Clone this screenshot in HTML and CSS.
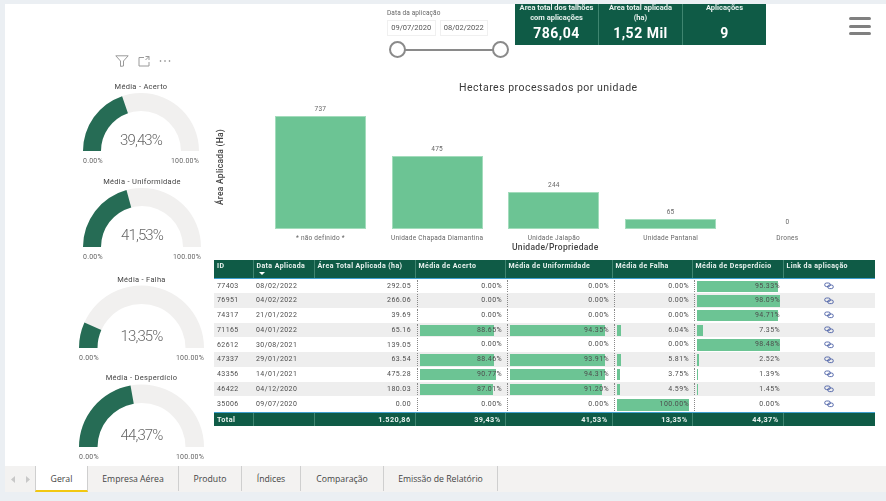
FILE: index.html
```html
<!DOCTYPE html>
<html lang="pt">
<head>
<meta charset="utf-8">
<title>Relatório</title>
<link rel="stylesheet" href="styles.css">
</head>
<body>
<main class="canvas">
  <aside class="gauges">
    <div class="toolbar">
      <svg class="tool" width="14" height="12" viewBox="0 0 14 12"><path d="M.8 .8h12.4L8.5 6v5L5.5 11.4V6z"/></svg>
      <svg class="tool" width="12" height="12" viewBox="0 0 12 12"><path d="M6 2.5H1v8.5h10V7M7.5 1.5h3.5v3.5M11 1.5L7.5 5"/></svg>
      <svg class="dots" width="12" height="4" viewBox="0 0 12 4"><circle cx="1.5" cy="2" r=".8"/><circle cx="6" cy="2" r=".8"/><circle cx="10.5" cy="2" r=".8"/></svg>
    </div>
    <svg class="gauge g1" width="205" height="90" viewBox="0 0 205 90">
      <text class="g-title" x="136" y="14">Média - Acerto</text>
      <path class="g-bg" d="M78 76A58 58 0 0 1 194 76L176 76A40 40 0 0 0 96 76Z"/>
      <path class="g-fg" d="M78 76A58 58 0 0 1 117.09 21.17L122.96 38.18A40 40 0 0 0 96 76Z"/>
      <text class="g-val" x="136" y="70">39,43%</text>
      <text class="g-min" x="78" y="88">0.00%</text>
      <text class="g-max" x="194" y="88">100.00%</text>
    </svg>
    <svg class="gauge" width="205" height="90" viewBox="0 0 205 90">
      <text class="g-title" x="137" y="11">Média - Uniformidade</text>
      <path class="g-bg" d="M78 74A59 59 0 0 1 196 74L178 74A41 41 0 0 0 96 74Z"/>
      <path class="g-fg" d="M78 74A59 59 0 0 1 121.48 17.08L126.22 34.44A41 41 0 0 0 96 74Z"/>
      <text class="g-val" x="137" y="67">41,53%</text>
      <text class="g-min" x="78" y="86">0.00%</text>
      <text class="g-max" x="196" y="86">100.00%</text>
    </svg>
    <svg class="gauge" width="205" height="90" viewBox="0 0 205 90">
      <text class="g-title" x="136.5" y="11">Média - Falha</text>
      <path class="g-bg" d="M74 77A62.5 62.5 0 0 1 199 77L180.5 77A44 44 0 0 0 92.5 77Z"/>
      <path class="g-fg" d="M74 77A62.5 62.5 0 0 1 79.42 51.55L96.31 59.08A44 44 0 0 0 92.5 77Z"/>
      <text class="g-val" x="136.5" y="70">13,35%</text>
      <text class="g-min" x="74" y="89">0.00%</text>
      <text class="g-max" x="199" y="89">100.00%</text>
    </svg>
    <svg class="gauge g4" width="205" height="90" viewBox="0 0 205 90">
      <text class="g-title" x="136.5" y="10">Média - Desperdício</text>
      <path class="g-bg" d="M74 77A62.5 62.5 0 0 1 199 77L180.5 77A44 44 0 0 0 92.5 77Z"/>
      <path class="g-fg" d="M74 77A62.5 62.5 0 0 1 125.51 15.47L128.76 33.69A44 44 0 0 0 92.5 77Z"/>
      <text class="g-val" x="136.5" y="70">44,37%</text>
      <text class="g-min" x="74" y="89">0.00%</text>
      <text class="g-max" x="199" y="89">100.00%</text>
    </svg>
  </aside>

  <section class="content">
    <header class="top">
      <div class="slicer">
        <div class="slicer-title">Data da aplicação</div>
        <div class="dates"><span class="date">09/07/2020</span><span class="date">08/02/2022</span></div>
        <div class="slider"><span class="handle"></span><span class="track"></span><span class="handle"></span></div>
      </div>
      <div class="kpis">
        <div class="kpi"><div class="kpi-title">Área total dos talhões com aplicações</div><div class="kpi-val">786,04</div></div>
        <div class="kpi"><div class="kpi-title">Área total aplicada (ha)</div><div class="kpi-val">1,52 Mil</div></div>
        <div class="kpi"><div class="kpi-title kpi-single">Aplicações</div><div class="kpi-val">9</div></div>
      </div>
      <div class="menu"><span></span><span></span><span></span></div>
    </header>

    <h1 class="chart-title">Hectares processados por unidade</h1>
    <div class="chart">
      <div class="y-title"><span>Área Aplicada (Ha)</span></div>
      <div class="plot">
        <div class="col"><span class="num">737</span><div class="bar b1"></div><span class="cat">* não definido *</span></div>
        <div class="col"><span class="num">475</span><div class="bar b2"></div><span class="cat">Unidade Chapada Diamantina</span></div>
        <div class="col"><span class="num">244</span><div class="bar b3"></div><span class="cat">Unidade Jalapão</span></div>
        <div class="col"><span class="num">65</span><div class="bar b4"></div><span class="cat">Unidade Pantanal</span></div>
        <div class="col"><span class="num">0</span><div class="bar b5"></div><span class="cat">Drones</span></div>
      </div>
    </div>
    <div class="x-title">Unidade/Propriedade</div>

    <table class="grid">
      <colgroup>
        <col class="c-id"><col class="c-date"><col class="c-area"><col class="c-a"><col class="c-u"><col class="c-f"><col class="c-d"><col class="c-l">
      </colgroup>
      <thead>
        <tr><th>ID</th><th class="sorted">Data Aplicada</th><th>Área Total Aplicada (ha)</th><th>Média de Acerto</th><th>Média de Uniformidade</th><th>Média de Falha</th><th>Média de Desperdício</th><th>Link da aplicação</th></tr>
      </thead>
      <tbody>
        <tr><td>77403</td><td>08/02/2022</td><td class="r">292.05</td>
          <td><div class="db"><span class="fill" style="width:0%"></span><span class="dv">0.00%</span></div></td>
          <td><div class="db"><span class="fill" style="width:0%"></span><span class="dv">0.00%</span></div></td>
          <td><div class="db"><span class="fill" style="width:0%"></span><span class="dv">0.00%</span></div></td>
          <td><div class="db"><span class="fill" style="width:95.33%"></span><span class="dv">95.33%</span></div></td>
          <td class="lk"><svg class="link" width="10" height="8" viewBox="0 0 10 8"><rect x=".7" y="1" width="5.6" height="3.6" rx="1.8"/><rect x="3.7" y="3" width="5.6" height="3.6" rx="1.8"/></svg></td></tr>
        <tr><td>76951</td><td>04/02/2022</td><td class="r">266.06</td>
          <td><div class="db"><span class="fill" style="width:0%"></span><span class="dv">0.00%</span></div></td>
          <td><div class="db"><span class="fill" style="width:0%"></span><span class="dv">0.00%</span></div></td>
          <td><div class="db"><span class="fill" style="width:0%"></span><span class="dv">0.00%</span></div></td>
          <td><div class="db"><span class="fill" style="width:98.09%"></span><span class="dv">98.09%</span></div></td>
          <td class="lk"><svg class="link" width="10" height="8" viewBox="0 0 10 8"><rect x=".7" y="1" width="5.6" height="3.6" rx="1.8"/><rect x="3.7" y="3" width="5.6" height="3.6" rx="1.8"/></svg></td></tr>
        <tr><td>74317</td><td>21/01/2022</td><td class="r">39.69</td>
          <td><div class="db"><span class="fill" style="width:0%"></span><span class="dv">0.00%</span></div></td>
          <td><div class="db"><span class="fill" style="width:0%"></span><span class="dv">0.00%</span></div></td>
          <td><div class="db"><span class="fill" style="width:0%"></span><span class="dv">0.00%</span></div></td>
          <td><div class="db"><span class="fill" style="width:94.71%"></span><span class="dv">94.71%</span></div></td>
          <td class="lk"><svg class="link" width="10" height="8" viewBox="0 0 10 8"><rect x=".7" y="1" width="5.6" height="3.6" rx="1.8"/><rect x="3.7" y="3" width="5.6" height="3.6" rx="1.8"/></svg></td></tr>
        <tr><td>71165</td><td>04/01/2022</td><td class="r">65.16</td>
          <td><div class="db"><span class="fill" style="width:88.65%"></span><span class="dv">88.65%</span></div></td>
          <td><div class="db"><span class="fill" style="width:94.35%"></span><span class="dv">94.35%</span></div></td>
          <td><div class="db"><span class="fill" style="width:6.04%"></span><span class="dv">6.04%</span></div></td>
          <td><div class="db"><span class="fill" style="width:7.35%"></span><span class="dv">7.35%</span></div></td>
          <td class="lk"><svg class="link" width="10" height="8" viewBox="0 0 10 8"><rect x=".7" y="1" width="5.6" height="3.6" rx="1.8"/><rect x="3.7" y="3" width="5.6" height="3.6" rx="1.8"/></svg></td></tr>
        <tr><td>62612</td><td>30/08/2021</td><td class="r">139.05</td>
          <td><div class="db"><span class="fill" style="width:0%"></span><span class="dv">0.00%</span></div></td>
          <td><div class="db"><span class="fill" style="width:0%"></span><span class="dv">0.00%</span></div></td>
          <td><div class="db"><span class="fill" style="width:0%"></span><span class="dv">0.00%</span></div></td>
          <td><div class="db"><span class="fill" style="width:98.48%"></span><span class="dv">98.48%</span></div></td>
          <td class="lk"><svg class="link" width="10" height="8" viewBox="0 0 10 8"><rect x=".7" y="1" width="5.6" height="3.6" rx="1.8"/><rect x="3.7" y="3" width="5.6" height="3.6" rx="1.8"/></svg></td></tr>
        <tr><td>47337</td><td>29/01/2021</td><td class="r">63.54</td>
          <td><div class="db"><span class="fill" style="width:88.46%"></span><span class="dv">88.46%</span></div></td>
          <td><div class="db"><span class="fill" style="width:93.91%"></span><span class="dv">93.91%</span></div></td>
          <td><div class="db"><span class="fill" style="width:5.81%"></span><span class="dv">5.81%</span></div></td>
          <td><div class="db"><span class="fill" style="width:2.52%"></span><span class="dv">2.52%</span></div></td>
          <td class="lk"><svg class="link" width="10" height="8" viewBox="0 0 10 8"><rect x=".7" y="1" width="5.6" height="3.6" rx="1.8"/><rect x="3.7" y="3" width="5.6" height="3.6" rx="1.8"/></svg></td></tr>
        <tr><td>43356</td><td>14/01/2021</td><td class="r">475.28</td>
          <td><div class="db"><span class="fill" style="width:90.77%"></span><span class="dv">90.77%</span></div></td>
          <td><div class="db"><span class="fill" style="width:94.31%"></span><span class="dv">94.31%</span></div></td>
          <td><div class="db"><span class="fill" style="width:3.75%"></span><span class="dv">3.75%</span></div></td>
          <td><div class="db"><span class="fill" style="width:1.39%"></span><span class="dv">1.39%</span></div></td>
          <td class="lk"><svg class="link" width="10" height="8" viewBox="0 0 10 8"><rect x=".7" y="1" width="5.6" height="3.6" rx="1.8"/><rect x="3.7" y="3" width="5.6" height="3.6" rx="1.8"/></svg></td></tr>
        <tr><td>46422</td><td>04/12/2020</td><td class="r">180.03</td>
          <td><div class="db"><span class="fill" style="width:87.01%"></span><span class="dv">87.01%</span></div></td>
          <td><div class="db"><span class="fill" style="width:91.20%"></span><span class="dv">91.20%</span></div></td>
          <td><div class="db"><span class="fill" style="width:4.59%"></span><span class="dv">4.59%</span></div></td>
          <td><div class="db"><span class="fill" style="width:1.45%"></span><span class="dv">1.45%</span></div></td>
          <td class="lk"><svg class="link" width="10" height="8" viewBox="0 0 10 8"><rect x=".7" y="1" width="5.6" height="3.6" rx="1.8"/><rect x="3.7" y="3" width="5.6" height="3.6" rx="1.8"/></svg></td></tr>
        <tr class="last"><td>35006</td><td>09/07/2020</td><td class="r">0.00</td>
          <td><div class="db"><span class="fill" style="width:0%"></span><span class="dv">0.00%</span></div></td>
          <td><div class="db"><span class="fill" style="width:0%"></span><span class="dv">0.00%</span></div></td>
          <td><div class="db"><span class="fill" style="width:100%"></span><span class="dv">100.00%</span></div></td>
          <td><div class="db"><span class="fill" style="width:0%"></span><span class="dv">0.00%</span></div></td>
          <td class="lk"><svg class="link" width="10" height="8" viewBox="0 0 10 8"><rect x=".7" y="1" width="5.6" height="3.6" rx="1.8"/><rect x="3.7" y="3" width="5.6" height="3.6" rx="1.8"/></svg></td></tr>
      </tbody>
      <tfoot>
        <tr><td>Total</td><td></td><td class="r">1.520,86</td><td class="r">39,43%</td><td class="r">41,53%</td><td class="r">13,35%</td><td class="r">44,37%</td><td></td></tr>
      </tfoot>
    </table>
  </section>
</main>

<nav class="tabs">
  <div class="arrows">
    <svg width="6" height="7" viewBox="0 0 6 7"><path d="M5 0v7L1 3.5z"/></svg>
    <svg width="6" height="7" viewBox="0 0 6 7"><path d="M1 0v7l4-3.5z"/></svg>
  </div>
  <a class="tab active t1">Geral</a>
  <a class="tab t2">Empresa Aérea</a>
  <a class="tab t3">Produto</a>
  <a class="tab t4">Índices</a>
  <a class="tab t5">Comparação</a>
  <a class="tab t6">Emissão de Relatório</a>
</nav>
</body>
</html>
```
FILE: styles.css
```css
* { box-sizing: border-box; }
html, body { margin: 0; height: 100%; }
body {
  background: #ebeff3;
  width: 886px;
  height: 501px;
  overflow: hidden;
  padding: 4px 0 9px 5px;
  display: flex;
  flex-direction: column;
  font-family: Roboto, "Liberation Sans", sans-serif;
  color: #555;
}
.canvas {
  height: 462px;
  background: #fff;
  display: flex;
  filter: blur(.3px);
}

/* gauges */
.gauges { width: 205px; flex: none; display: flex; flex-direction: column; gap: 8px; }
.toolbar { height: 71px; margin-bottom: -8px; padding: 51px 0 0 110px; display: flex; align-items: flex-start; gap: 9px; }
.tool { fill: none; stroke: #9a9a9a; stroke-width: 1; }
.dots { fill: #777; margin-top: 4px; }
.gauge { display: block; flex: none; }
.g4 { margin-top: 1px; }
.gauge text { font-family: Roboto, "Liberation Sans", sans-serif; }
.g-title { font-size: 7.5px; fill: #444; text-anchor: middle; letter-spacing: .3px; }
.g-bg { fill: #f1f0ef; }
.g-fg { fill: #266c55; }
.g-val { font-size: 15px; font-weight: 300; fill: #666; text-anchor: middle; letter-spacing: -.9px; }
.g-min, .g-max { font-size: 7px; fill: #666; letter-spacing: .2px; }
.g-max { text-anchor: end; }

/* right side */
.content { flex: 1; min-width: 0; padding: 0 11px 0 4px; display: flex; flex-direction: column; }
.top { height: 76px; display: flex; align-items: flex-start; }
.slicer { width: 128px; margin-left: 173px; padding-top: 5px; flex: none; }
.slicer-title { font-size: 6.5px; line-height: 8px; color: #666; letter-spacing: .1px; }
.dates { display: flex; gap: 4px; margin-top: 3px; }
.date {
  width: 48.5px; height: 16px; border: 1px solid #f0f0f0;
  font-size: 7.5px; line-height: 14px; text-align: center; color: #555;
}
.slider { display: flex; align-items: center; width: 120px; margin: 5px 0 0 2px; }
.handle { width: 17px; height: 17px; border-radius: 50%; border: 2px solid #8a8a8a; background: #fff; flex: none; }
.track { flex: 1; height: 2px; background: #8a8a8a; margin: 0 -1px; }
.kpis { display: flex; height: 40.5px; width: 251px; background: #0f5b46; flex: none; overflow: hidden; }
.kpi { flex: 1; color: #fff; text-align: center; border-left: 1px solid #3f8570; padding: 0 4px; }
.kpi:first-child { border-left: 0; }
.kpi-title { font-size: 7.5px; line-height: 10px; font-weight: 700; margin-top: -1px; height: 20px; color: #e8f1ee; }
.kpi-val { font-size: 14px; line-height: 18px; font-weight: 700; margin-top: 1px; letter-spacing: .5px; }
.menu { margin: 13px 0 0 83px; display: flex; flex-direction: column; gap: 4.5px; }
.menu span { display: block; width: 22px; height: 3px; border-radius: 1.5px; background: #808080; }

.chart-title { margin: 0 0 0 245px; font-size: 10.5px; line-height: 16px; font-weight: 400; color: #3a3a3a; letter-spacing: .49px; }
.chart { display: flex; height: 153px; }
.y-title { width: 48px; flex: none; padding-top: 33px; }
.y-title span {
  display: block; writing-mode: vertical-rl; transform: rotate(180deg);
  font-size: 8.5px; color: #444; letter-spacing: .25px; line-height: 12px; font-weight: 500;
}
.plot { display: flex; }
.col { width: 116.75px; flex: none; display: flex; flex-direction: column; align-items: center; justify-content: flex-end; }
.num { font-size: 6.5px; line-height: 8px; color: #666; margin-bottom: 3px; letter-spacing: .2px; }
.bar { width: 91px; background: #6cc494; border: 1px solid #a3dcbc; flex: none; }
.b1 { height: 113px; }
.b2 { height: 73px; }
.b3 { height: 37px; }
.b4 { height: 10px; }
.b5 { height: 0; border: 0; }
.cat { font-size: 6.5px; line-height: 7px; height: 14.5px; padding-top: 5.5px; box-sizing: content-box; color: #666; letter-spacing: .25px; white-space: nowrap; }
.x-title { margin: -6.5px 0 0 298px; height: 9px; font-size: 8.5px; line-height: 9px; color: #444; letter-spacing: .3px; font-weight: 500; }

/* table */
.grid {
  border-collapse: collapse; table-layout: fixed; width: 661px; margin-top: 8.5px;
  font-size: 7px; letter-spacing: .4px; color: #4d4d4d;
}
.c-id { width: 39px; } .c-date { width: 61px; } .c-area { width: 101px; } .c-a { width: 90px; }
.c-u { width: 107px; } .c-f { width: 80px; } .c-d { width: 91px; } .c-l { width: 92px; }
.grid thead th {
  height: 18px; background: #0f5b46; color: #eaf3f0; font-weight: 700; font-size: 7px;
  text-align: left; vertical-align: top; padding: 2px 3px 0; line-height: 9px;
  border-left: 1px solid #3f8570; border-bottom: 1px solid #3fa0d0; white-space: nowrap; overflow: hidden;
}
.grid thead th:first-child { border-left: 0; }
.sorted { position: relative; }
.sorted::after {
  content: ""; position: absolute; left: 5px; top: 12px;
  border: 3px solid transparent; border-top: 3px solid #fff; border-bottom: 0;
}
.grid tbody tr { height: 14.75px; }
.grid tbody tr.last { height: 16.5px; }
.grid tbody tr:nth-child(even) { background: #eeeeee; }
.grid tbody td { padding: 0 3px; line-height: 12px; white-space: nowrap; }
.grid td.r { text-align: right; padding-right: 4px; }
.grid tbody td:nth-child(n+4):nth-child(-n+7) { padding: 1px 3px 1px 2px; }
.db { position: relative; height: 12.5px; border-left: 1px dotted #888; padding-left: 1px; text-align: right; }
.db .fill { position: absolute; left: 2px; top: 1px; bottom: 0; max-width: calc(100% - 2px); background: #6cc494; }
.dv { position: relative; line-height: 13px; }
.lk { text-align: center; }
.link { display: inline-block; vertical-align: middle; fill: none; stroke: #4a5fa5; stroke-width: .9; }
.grid tfoot td {
  height: 13px; background: #0f5b46; color: #eaf3f0; font-weight: 700; font-size: 7.3px;
  padding: 0 3px; line-height: 12px; border-top: 1px solid #3fa0d0; border-left: 1px solid #3f8570;
}
.grid tfoot td:first-child { border-left: 0; }

/* tabs */
.tabs {
  height: 26px; flex: none; background: #f3f2f1; display: flex; align-items: stretch;
  font-family: "Open Sans", "Liberation Sans", sans-serif; font-size: 8.7px; color: #444;
}
.arrows { width: 30px; display: flex; align-items: center; gap: 9px; padding-left: 5px; fill: #c8c8c8; flex: none; }
.tab { display: flex; align-items: center; justify-content: center; border-right: 1px solid #cfcfcf; flex: none; height: 25px; padding-top: 1px; }
.t1 { width: 53px; }
.t2 { width: 91px; }
.t3 { width: 63px; }
.t4 { width: 59px; }
.t5 { width: 83px; }
.t6 { width: 114px; }
.active { background: #fff; border-left: 1px solid #cfcfcf; border-right: 1px solid #cfcfcf; border-bottom: 2px solid #f2c811; height: 26px; }
```
